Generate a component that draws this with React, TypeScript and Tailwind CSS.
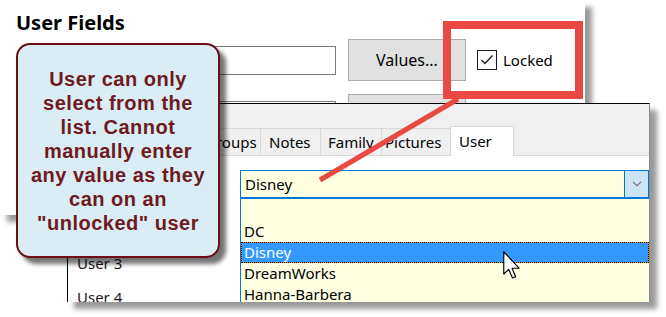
import React from "react";

const ui = { fontFamily: '"Noto Sans", "Open Sans", sans-serif' };
const callFont = { fontFamily: '"Liberation Sans", Arial, sans-serif' };

function Tab({ label, w, pl, selected }: { label: string; w: string; pl: string; selected?: boolean }) {
  if (selected) {
    return (
      <div className={`${w} ${pl} h-[30px] -mb-px flex items-center bg-white border-t border-l border-r border-[#d9d9d9] text-[15px] text-black`}>
        {label}
      </div>
    );
  }
  return (
    <div className={`${w} ${pl} h-[27px] flex items-center bg-[#f0f0f0] border-t border-l border-[#d9d9d9] text-[15px] text-black overflow-hidden whitespace-nowrap`}>
      {label}
    </div>
  );
}

export default function App() {
  return (
    <div className="relative w-[666px] h-[317px] bg-white overflow-hidden" style={ui}>
      {/* Back window */}
      <div className="absolute left-0 top-0 w-[585px] h-[215px] bg-white shadow-[7px_7px_5px_rgba(0,0,0,0.4)]">
        <div className="pl-[16px] pt-[10px]">
          <div className="text-[20px] font-bold leading-[25px] text-black">User Fields</div>
          <div className="mt-[4px] flex items-center h-[42px]">
            <div className="ml-[130px] w-[190px] h-[29px] border border-[#7a7a7a] bg-white" />
            <div className="ml-[12px] w-[118px] h-[42px] border border-[#adadad] bg-[#e1e1e1] flex items-center justify-center text-[16px] text-black">
              Values...
            </div>
            <div className="ml-[11px] w-[20px] h-[20px] border border-[#1b1b30] bg-white flex items-center justify-center">
              <svg width="14" height="12" viewBox="0 0 14 12">
                <path d="M1.5 6 L5 9.5 L12.5 1.5" fill="none" stroke="#222" strokeWidth="1.4" />
              </svg>
            </div>
            <div className="ml-[6px] text-[15px] text-black">Locked</div>
          </div>
          <div className="mt-[13px] flex items-center h-[42px]">
            <div className="ml-[130px] w-[190px] h-[29px] border border-[#7a7a7a] bg-white" />
            <div className="ml-[12px] w-[118px] h-[42px] border border-[#adadad] bg-[#e1e1e1]" />
          </div>
        </div>
      </div>

      {/* Front window */}
      <div className="absolute left-[67px] top-[103px] w-[583px] h-[199px] bg-white border-t border-l border-black border-r border-r-[#8a8a8a] overflow-hidden shadow-[7px_7px_5px_rgba(0,0,0,0.4)]">
        <div className="h-[52px] bg-[#f0f0f0] flex flex-col justify-end">
          <div className="flex items-end border-b border-[#d9d9d9]">
            <Tab label="" w="w-[66px]" pl="pl-[8px]" />
            <Tab label="" w="w-[66px]" pl="pl-[8px]" />
            <Tab label="Groups" w="w-[60px]" pl="pl-[4px]" />
            <Tab label="Notes" w="w-[60px]" pl="pl-[8px]" />
            <Tab label="Family" w="w-[61px]" pl="pl-[7px]" />
            <Tab label="Pictures" w="w-[69px]" pl="pl-[3px]" />
            <Tab label="User" w="w-[64px]" pl="pl-[8px]" selected />
          </div>
        </div>
        <div className="flex">
          <div className="w-[172px] pl-[9px] pt-[22px] flex flex-col text-[15px] text-[#1a1a1a]">
            <div className="h-[34px]" />
            <div className="h-[34px]" />
            <div className="h-[34px] flex items-center">User 3</div>
            <div className="h-[34px] flex items-center">User 4</div>
          </div>
          <div className="flex-1 pt-[14px]">
            <div className="h-[28px] border border-[#0078d7] bg-[#ffffe1] flex">
              <div className="flex-1 pl-[4px] flex items-center text-[15px] text-black">Disney</div>
              <div className="w-[24px] bg-[#cce4f7] border-l border-[#0078d7] flex items-center justify-center">
                <svg width="10" height="6" viewBox="0 0 10 6">
                  <path d="M1 0.8 L5 4.8 L9 0.8" fill="none" stroke="#7a6060" strokeWidth="1.1" />
                </svg>
              </div>
            </div>
            <div className="border-l border-t border-[#0078d7] bg-[#ffffe1] text-[15px] text-black">
              <div className="h-[22px]" />
              <div className="h-[21px] pl-[3px] flex items-center">DC</div>
              <div className="h-[21px] border border-dotted border-black bg-[#e08a1c]">
                <div className="h-full bg-[#3399ff] text-white pl-[2px] flex items-center">Disney</div>
              </div>
              <div className="h-[21px] pl-[3px] flex items-center">DreamWorks</div>
              <div className="h-[21px] pl-[3px] flex items-center">Hanna-Barbera</div>
            </div>
          </div>
        </div>
      </div>

      {/* Callout */}
      <div
        className="absolute left-[16px] top-[43px] w-[204px] h-[215px] rounded-[14px] border-2 border-[#6a1016] bg-[#daedf4] flex items-center justify-center text-center shadow-[6px_6px_4px_rgba(0,0,0,0.55)]"
        style={callFont}
      >
        <div className="text-[20px] font-bold leading-[24px] tracking-[0.5px] text-[#6e1a1e]">
          User can only
          <br />
          select from the
          <br />
          list. Cannot
          <br />
          manually enter
          <br />
          any value as they
          <br />
          can on an
          <br />
          "unlocked" user
        </div>
      </div>

      {/* Red highlight */}
      <div className="absolute left-[443px] top-[21px] w-[140px] h-[78px] border-[8px] border-[#e84a43]" />
      <svg className="absolute left-0 top-0 pointer-events-none" width="666" height="317">
        <line x1="458" y1="99" x2="320" y2="180" stroke="#e84a43" strokeWidth="5" />
      </svg>

      {/* Cursor */}
      <svg className="absolute left-[503px] top-[251px]" width="18" height="28" viewBox="0 0 12.5 19.5">
        <path d="M0.5 0.5 L0.5 16 L4 12.8 L6.6 18.8 L8.8 17.9 L6.3 12 L11.2 12 Z" fill="#fff" stroke="#000" strokeWidth="0.8" strokeLinejoin="round" />
      </svg>
    </div>
  );
}
